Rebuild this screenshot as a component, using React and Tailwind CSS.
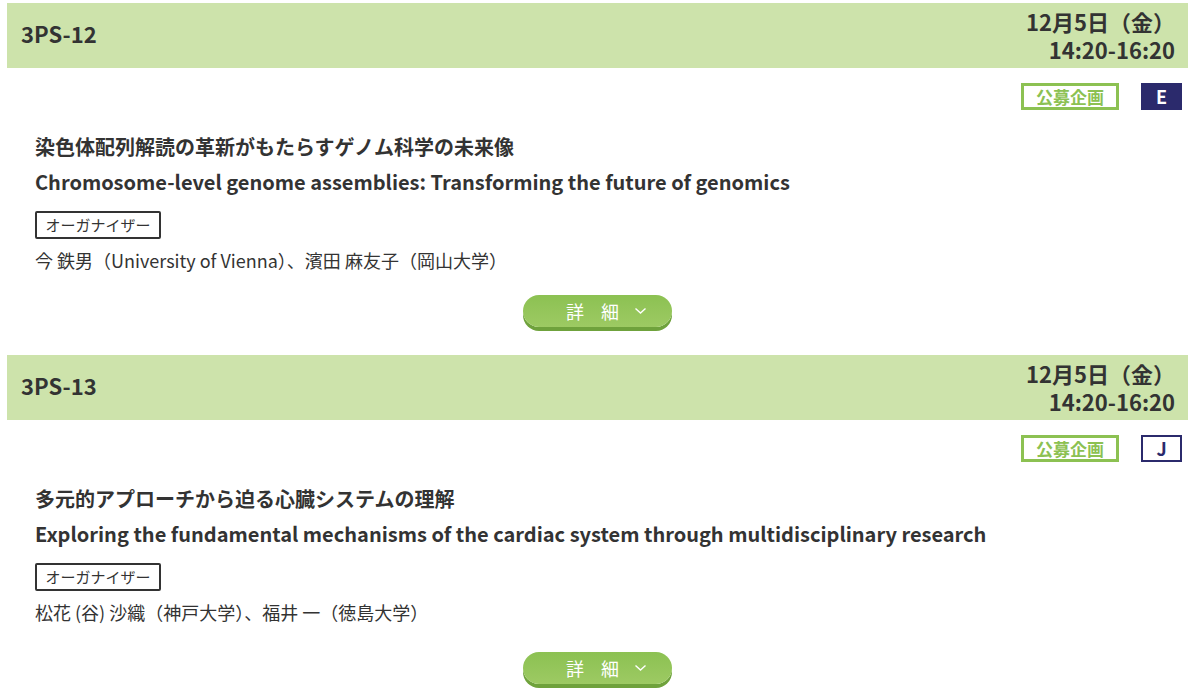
import React from 'react';

const sessions = [
  {
    code: '3PS-12',
    date: '12月5日（金）',
    time: '14:20-16:20',
    lang: 'E',
    titleJa: '染色体配列解読の革新がもたらすゲノム科学の未来像',
    titleEn: 'Chromosome-level genome assemblies: Transforming the future of genomics',
    organizers: '今 鉄男（University of Vienna）、濱田 麻友子（岡山大学）',
    wide: false,
  },
  {
    code: '3PS-13',
    date: '12月5日（金）',
    time: '14:20-16:20',
    lang: 'J',
    titleJa: '多元的アプローチから迫る心臓システムの理解',
    titleEn: 'Exploring the fundamental mechanisms of the cardiac system through multidisciplinary research',
    organizers: '松花 (谷) 沙織（神戸大学）、福井 一（徳島大学）',
    wide: true,
  },
];

const Session = ({ s }) => (
  <div className="mb-[28px]">
    <div className="h-[65px] bg-[#cde3ab] flex items-center justify-between pl-[14px] pr-[13px]">
      <div className="text-[22px] font-bold text-[#333] pb-[5px]">{s.code}</div>
      <div className="text-right text-[22px] font-bold leading-[28px] text-[#333] pb-[2px]">
        {s.date}
        <br />
        {s.time}
      </div>
    </div>

    <div className="px-[28px]">
      <div className="flex justify-end items-center gap-[22px] mt-[15px] mr-[-22px]">
        <span className="h-[27px] w-[98px] border-[3px] border-[#8cc152] text-[#8cc152] font-bold text-[17px] flex items-center justify-center">
          公募企画
        </span>
        {s.lang === 'E' ? (
          <span className="h-[27px] w-[41px] bg-[#2b2a6c] text-white font-bold text-[18px] flex items-center justify-center">
            E
          </span>
        ) : (
          <span className="h-[27px] w-[41px] border-2 border-[#2b2a6c] text-[#2b2a6c] font-bold text-[18px] flex items-center justify-center">
            J
          </span>
        )}
      </div>

      <div className="mt-[20px] text-[20px] font-bold leading-[34px] text-[#333]">{s.titleJa}</div>
      <div className="mt-[1px] text-[20px] font-bold leading-[34px] text-[#333]">{s.titleEn}</div>

      <div className="mt-[12px] inline-flex h-[28px] w-[126px] items-center justify-center border-2 border-[#333] rounded-[2px] text-[15px] text-[#333]">
        オーガナイザー
      </div>
      <div className="mt-[7px] text-[18px] leading-[28px] text-[#333]">{s.organizers}</div>
    </div>

    <div className={`flex justify-center ${s.wide ? 'mt-[26px]' : 'mt-[21px]'}`}>
      <button className="h-[32px] w-[149px] rounded-full bg-gradient-to-b from-[#8cc152] to-[#9dca63] shadow-[0_4px_0_#6fa23c] flex items-center pl-[43px] text-white text-[18px]">
        <span>詳</span>
        <span className="ml-[17px]">細</span>
        <svg className="ml-[15px]" width="13" height="8" viewBox="0 0 13 8" fill="none" stroke="white" strokeWidth="1.4">
          <path d="M1.5 1.5 L6.5 6 L11.5 1.5" />
        </svg>
      </button>
    </div>
  </div>
);

export default function App() {
  return (
    <div
      className="w-[1200px] h-[696px] overflow-hidden bg-white pt-[3px] pl-[7px] pr-[12px]"
      style={{ fontFamily: '"Noto Sans CJK JP", "Noto Sans", sans-serif' }}
    >
      {sessions.map((s) => (
        <Session key={s.code} s={s} />
      ))}
    </div>
  );
}
